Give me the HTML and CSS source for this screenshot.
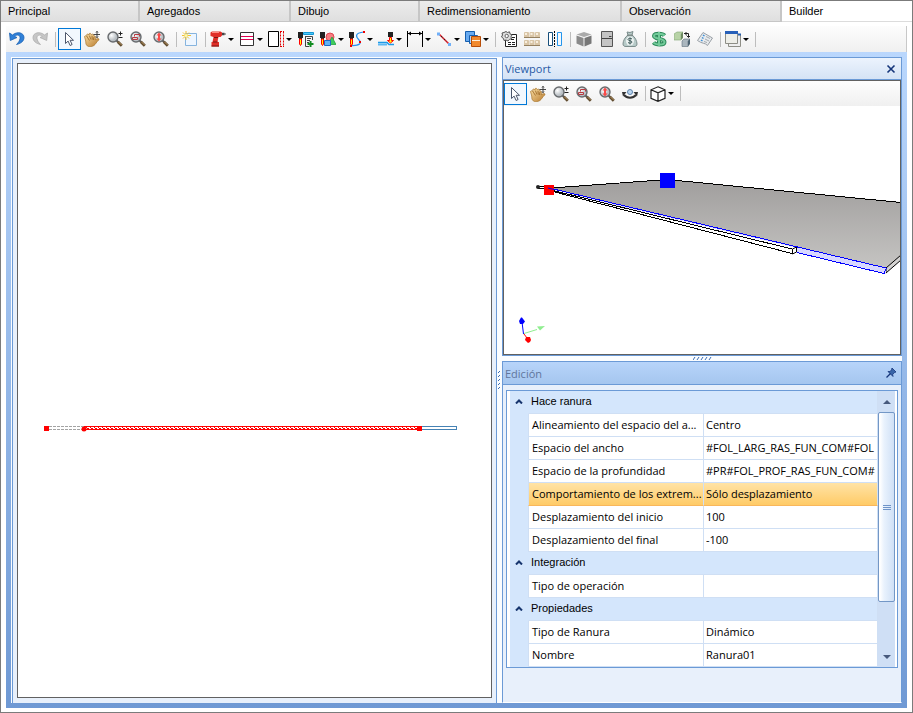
FILE: index.html
```
<!DOCTYPE html>
<html lang="es">
<head>
    <meta charset="UTF-8">
    <meta name="viewport" content="width=device-width, initial-scale=1.0">
    <title>Builder</title>
    <link rel="stylesheet" href="styles.css">
</head>
<body>
    <!-- Icons used more than once -->
    <svg class="sprite" aria-hidden="true">
        <defs>
            <radialGradient id="glass" cx="35%" cy="35%">
                <stop offset="0" stop-color="#fff"/>
                <stop offset="1" stop-color="#b9bfc4"/>
            </radialGradient>
            <linearGradient id="handFill" x1="0" y1="0" x2="1" y2="1">
                <stop offset="0" stop-color="#fbe0a6"/>
                <stop offset="1" stop-color="#b87a2c"/>
            </linearGradient>
            <linearGradient id="plate" x1="0" y1="0" x2="0" y2="1">
                <stop offset="0" stop-color="#a09e9d"/>
                <stop offset="1" stop-color="#c5c4c2"/>
            </linearGradient>
            <pattern id="hatch" x="84" y="427" width="4" height="2" patternUnits="userSpaceOnUse">
                <rect width="4" height="2" fill="#fff"/>
                <path d="M0 1.500h1M2 .5h1M3 1.500h1" stroke="#f00" shape-rendering="crispEdges"/>
            </pattern>
        </defs>
        <symbol id="i-cursor" viewBox="0 0 16 16">
            <path d="M4.500 1.500v11l2.600-2.400 2 4.400 2-1-2-4.200h3.400z" fill="#fff" stroke="#4b566b"/>
        </symbol>
        <symbol id="i-hand" viewBox="0 0 16 16">
            <path d="M.5 5.500C1 4 2.500 5 3.500 6.500L2.500 4c.5-1.500 2-1 2.700.3L5 2.800c.9-1 2.200-.3 2.500 1C8.500 2.500 10 3.300 10 5c1.500 0 1.800 1.300 1.500 2.500L11 9c2-1.800 4.500-1.800 4-.3-1.500 1-2.500 3-4 4.800-2 2.500-7 3-8.500.5C1.500 12.500 2 11.500 1.700 10z" fill="url(#handFill)" stroke="#a8752c" stroke-width=".7"/>
            <path d="M3.500 6.500l2 3M5.500 5l1.500 3.500M8 5l.3 3.500M10 6l-.7 3" stroke="#8f5a18" stroke-width=".7"/>
            <path d="M13 0v7M9.500 3.500h6.500M12 1.500l1-1 1 1M12 5.500l1 1 1-1" stroke="#333" stroke-width=".9" fill="none"/>
        </symbol>
        <symbol id="i-lens" viewBox="0 0 16 16">
            <path d="M9.500 9.500l1.500 1.500" stroke="#555" stroke-width="2"/>
            <path d="M10.800 10.800l4 4" stroke="#5f4a2d" stroke-width="2.800"/>
            <path d="M11.500 10.900l3 3" stroke="#b99663" stroke-width="1"/>
            <circle cx="6" cy="6" r="5" fill="url(#glass)" stroke="#686b6e" stroke-width="1.400"/>
        </symbol>
        <symbol id="i-zoom" viewBox="0 0 16 16">
            <use href="#i-lens"/>
            <path d="M11.500 2.500h4M13.500 .5v4M11.500 6.500h4" stroke="#222"/>
        </symbol>
        <symbol id="i-zoomrect" viewBox="0 0 16 16">
            <use href="#i-lens"/>
            <path d="M2.500 6.500v2h5v-2h-5M4.500 5.500v-2h5v2" fill="none" stroke="#b83a40"/>
        </symbol>
        <symbol id="i-zoomfit" viewBox="0 0 16 16">
            <use href="#i-lens"/>
            <path d="M6 1.500L3.500 4.500H5v3H3.500L6 10.500l2.500-3H7v-3h1.500z" fill="#fa4a48"/>
        </symbol>
        <symbol id="i-pen" viewBox="0 0 16 16">
            <path d="M0 1h5v6H4v1H1V7H0z" fill="#222"/>
            <path d="M1.500 8h2v5l-1 1.500-1-1.500z" fill="#ff0" stroke="#f00"/>
        </symbol>
    </svg>

    <div class="window">
        <div class="tabs" role="tablist">
            <button class="tab" role="tab">Principal</button>
            <button class="tab" role="tab">Agregados</button>
            <button class="tab" role="tab">Dibujo</button>
            <button class="tab" role="tab">Redimensionamiento</button>
            <button class="tab" role="tab">Observación</button>
            <button class="tab active" role="tab" aria-selected="true">Builder</button>
        </div>

        <div class="toolbar main-toolbar" role="toolbar">
            <button class="tool" aria-label="Deshacer"><svg viewBox="0 0 16 16"><path d="M.5 2l.8 7.500 6.700-3-2.300-1C8 3 11.500 4 11 7.500c-.2 2-1.500 4-3.500 6C12 12.500 15 10 15 6.500 15 1.500 8 0 3.500 4z" fill="#2f80d8" stroke="#1c62b4" stroke-width=".8"/></svg></button>
            <button class="tool" aria-label="Rehacer"><svg viewBox="0 0 16 16"><path d="M15.500 2l-.8 7.500-6.700-3 2.300-1C8 3 4.500 4 5 7.500c.2 2 1.500 4 3.500 6C4 12.500 1 10 1 6.500 1 1.500 8 0 12.500 4z" fill="#c6c6c6" stroke="#adadad" stroke-width=".8"/></svg></button>
            <span class="sep"></span>
            <button class="tool selected" aria-label="Seleccionar"><svg><use href="#i-cursor"/></svg></button>
            <button class="tool" aria-label="Mover vista"><svg><use href="#i-hand"/></svg></button>
            <button class="tool" aria-label="Zoom"><svg><use href="#i-zoom"/></svg></button>
            <button class="tool" aria-label="Zoom ventana"><svg><use href="#i-zoomrect"/></svg></button>
            <button class="tool" aria-label="Zoom total"><svg><use href="#i-zoomfit"/></svg></button>
            <span class="sep"></span>
            <button class="tool" aria-label="Nuevo"><svg viewBox="0 0 16 16"><path d="M3.500 2.500h11v12h-11z" fill="#eef6ff" stroke="#86b4de"/><path d="M4 0v9M0 4.500h9M1 1.500l6 6M7 1.500l-6 6" stroke="#f2c230"/><circle cx="4" cy="4.500" r="1.500" fill="#fff9a8"/></svg></button>
            <span class="sep"></span>
            <button class="tool drop" aria-label="Perforar"><svg viewBox="0 0 16 16"><path d="M.5 1.500L2 .5h8.500L12 1.500v3L10.500 6H8.500L8 8l-.5 3H9v4.500H1.500V11h1L3.500 6 .5 5z" fill="#e02e28"/><path d="M2 1.500h7" stroke="#ff8a80"/><path d="M12 3h2.500" stroke="#444" stroke-width="2.500"/><path d="M14 3h2" stroke="#555"/><path d="M4 6.500h4M3 11h4.500M1.500 15h7.500" stroke="#7b1512"/></svg></button>
            <button class="tool drop" aria-label="Ranura"><svg viewBox="0 0 16 16"><path d="M1.500 1.500h13v13h-13z" fill="#fff" stroke="#333"/><path d="M2 5.500h12M2 8.500h12" stroke="#e00050"/></svg></button>
            <button class="tool drop" aria-label="Borde"><svg viewBox="0 0 16 16"><path d="M.5 .5h10v15H.5z" fill="#fff" stroke="#000"/><path d="M12.500 .5v15M15.500 .5v15M12 .5h4M12 15.500h4" fill="none" stroke="#e00000" stroke-dasharray="2 1"/></svg></button>
            <button class="tool" aria-label="Agregar operación"><svg viewBox="0 0 16 16"><use href="#i-pen" width="16" height="16"/><path d="M5.500 1.500h10v2h-10z" fill="#4cc8f8" stroke="#1497d4"/><path d="M7.500 5v10.500H11M7 5.500h7.500V9M9 7.500h4M9 9.500h3M9 11.500h2" fill="none" stroke="#444"/><path d="M12.500 10v6M9.500 13h6" stroke="#118c20" stroke-width="2"/></svg></button>
            <button class="tool drop" aria-label="Formas"><svg viewBox="0 0 16 16"><circle cx="10" cy="6" r="4" fill="#f77d82" stroke="#de4750"/><use href="#i-pen" width="16" height="16"/><path d="M12 6l4 7.500H8z" fill="#3dcc5e" stroke="#189b37" stroke-width=".7"/><path d="M4.500 9.500h6v5h-6z" fill="#61b2f4" stroke="#1c6bc8"/></svg></button>
            <button class="tool drop" aria-label="Curva"><svg viewBox="0 0 16 16"><path d="M15 1C5 2 7 6 10 9s1 6-8 5.500" fill="none" stroke="#2593ef" stroke-width="1.200"/><use href="#i-pen" width="16" height="16"/><path d="M14 0h2v2h-2zM10 10h2v2h-2zM1 14h2v2H1z" fill="#e00"/></svg></button>
            <button class="tool drop" aria-label="Recorrido"><svg viewBox="0 0 16 16"><path d="M10 1h5v5h-5z" fill="#222"/><path d="M11.500 6.500h2v3h2L12.500 12l-3-2.500h2z" fill="#ff0" stroke="#f00"/><path d="M0 11.500h9l2 2h5" fill="none" stroke="#1c9ae8" stroke-width="1.500"/><path d="M0 13.500h9" stroke="#5cb8f4" stroke-width="2"/></svg></button>
            <button class="tool drop" aria-label="Cota"><svg viewBox="0 0 16 16"><path d="M.5 0v16M15.500 0v16M1 2.500h14" stroke="#000"/><path d="M1 2.500l3-2v4zM15 2.500l-3-2v4z" fill="#000"/></svg></button>
            <button class="tool drop" aria-label="Línea"><svg viewBox="0 0 16 16"><path d="M3 3l10 10" stroke="#df2630" stroke-width="1.600"/><path d="M5 5l6 6" stroke="#222" stroke-dasharray="2 2"/><path d="M1 1.500h3v3H1zM12 12h3v3h-3z" fill="#70b0f8"/></svg></button>
            <button class="tool drop" aria-label="Orden"><svg viewBox="0 0 16 16"><path d="M.5 .5h9v10h-9z" fill="#68aaf0" stroke="#165fae"/><path d="M4.500 4.500h8v8h-8z" fill="#b7d7f8" stroke="#165fae"/><path d="M6.500 5.500h9v10h-9z" fill="#f28a2e" stroke="#b74d08"/><path d="M7 9.500h8" stroke="#fff0dc"/></svg></button>
            <span class="sep"></span>
            <button class="tool" aria-label="Script"><svg viewBox="0 0 16 16"><path d="M4.500 3.500h11v12h-11z" fill="#fff" stroke="#222"/><path d="M7 6.500h7M10 8.500h4M7 11.500h7M7 13.500h7" stroke="#222" stroke-dasharray="3 1"/><path d="M5 .5l1.500 1L8.500.8l.5 2 2 1-1 2 .5 2-2 .5L7 10 5 9l-2 .5-.5-2L.5 6l1-2L1 2l2-.5z" fill="#ddd" stroke="#555"/><circle cx="5.700" cy="5" r="1.700" fill="#fff" stroke="#666"/></svg></button>
            <button class="tool" aria-label="Biblioteca"><svg viewBox="0 0 16 16"><g fill="#d9c5a6"><rect y="1" width="5" height="6" rx="1"/><rect x="5.500" y="1" width="5" height="6" rx="1"/><rect x="11" y="1" width="5" height="6" rx="1"/><rect y="9" width="5" height="6" rx="1"/><rect x="5.500" y="9" width="5" height="6" rx="1"/><rect x="11" y="9" width="5" height="6" rx="1"/></g><path d="M0 6.500h16M0 14.500h16" stroke="#95805f"/><path d="M1 3h2M6.500 3h2M12 3h2M1 11h2M6.500 11h2M12 11h2" stroke="#f8eedd" stroke-width="2"/></svg></button>
            <button class="tool" aria-label="Simetría"><svg viewBox="0 0 16 16"><path d="M1.500 1.500h4v13h-4z" fill="#fff" stroke="#174f7b"/><path d="M10.500 1.500h4v13h-4z" fill="#f2f9ff" stroke="#2495ec"/><path d="M7.500 0v16" stroke="#000" stroke-dasharray="2 1"/></svg></button>
            <span class="sep"></span>
            <button class="tool" aria-label="Módulo"><svg viewBox="0 0 16 16"><path d="M8 1l7.500 2.500L8 6 .5 3.500z" fill="#aaa"/><path d="M.5 4.500L7.500 7v8.500l-7-3z" fill="#8a8a8a"/><path d="M15.500 4.500L8.500 7v8.500l7-3z" fill="#777"/></svg></button>
            <button class="tool" aria-label="Puerta"><svg viewBox="0 0 16 16"><path d="M2.500 .5h11v15h-11z" fill="#c4c4c4" stroke="#555"/><path d="M3 7.500h10M10 5.500h2.500" stroke="#444"/></svg></button>
            <button class="tool" aria-label="Costo"><svg viewBox="0 0 16 16"><path d="M5 1l3 .5L11 .5 10 4c3 2 5 6 5 9 0 2-1.500 2.500-3 2.500H4C2.500 15.500 1 15 1 13c0-3 2-7 5-9z" fill="#b7cac8" stroke="#7c8d8c"/><path d="M5.500 4.200h5" stroke="#69716f"/><ellipse cx="8" cy="10" rx="4" ry="4.500" fill="#edf3f2"/><path d="M10 8C9 7 6 7 6 8.500s4 1 4 2.500-3 1.500-4 .5M8 6.500v7" fill="none" stroke="#3e5a5a"/></svg></button>
            <span class="sep"></span>
            <button class="tool" aria-label="Precio"><svg viewBox="0 0 16 16"><path d="M13.500 4.500C12 2.500 3 1.500 3 5c0 3.500 10.500 2 10.500 6 0 3.500-9 3-11 .5M8 1v14" fill="none" stroke="#2e8a5b" stroke-width="4"/><path d="M13.500 4.500C12 2.500 3 1.500 3 5c0 3.500 10.500 2 10.500 6 0 3.500-9 3-11 .5M8 1v14" fill="none" stroke="#72cb9a" stroke-width="2"/></svg></button>
            <button class="tool" aria-label="Reemplazar"><svg viewBox="0 0 16 16"><path d="M0 3l3-2h6L7 3v6H0z" fill="#b8d3a7" stroke="#80a574" stroke-width=".6"/><path d="M7 3l2-2v6L7 9z" fill="#6c8961"/><path d="M8 10l2-2h6l-2 2v5.500H8z" fill="#aab6be" stroke="#60717d" stroke-width=".6"/><path d="M14 10l2-2v5l-2 2.500z" fill="#4d6271"/><path d="M10 2.500h4.500V6M12.500 4.500l2 2 2-2M12 1v3" fill="none" stroke="#222"/></svg></button>
            <button class="tool" aria-label="Informe"><svg viewBox="0 0 16 16"><path d="M6 1.500l9.500 5.500-5 7.500C8 11.500 5 13 .5 9.500z" fill="#e8ebee" stroke="#9aa0a6"/><path d="M6 4l1.500 1M5 6.500L6.500 7.500M4 9l1.500 1" stroke="#3d8ed4" stroke-width="1.500"/><path d="M9 5.500l4 2M8 8l4 2M7 10.500l3 1" stroke="#a5abb0"/></svg></button>
            <span class="sep"></span>
            <button class="tool drop" aria-label="Ventanas"><svg viewBox="0 0 16 16"><path d="M3.500 3.500h12v12h-12z" fill="#eee" stroke="#8e8e86"/><path d="M3 3.500h13" stroke="#285fae" stroke-width="2"/><path d="M.5 1.500h12v11H.5z" fill="#eeeee8" stroke="#8e8e86"/><path d="M0 1.500h13" stroke="#2860b8" stroke-width="3"/></svg></button>
            <span class="sep"></span>
        </div>

        <div class="dock">
            <div class="panel drawing">
                <div class="sheet">
                    <svg class="scene" role="img" aria-label="Vista superior">
                        <g transform="translate(-18 -64)">
                            <path d="M49 426.500h35M49 429.500h35" stroke="#a3a3a3" stroke-dasharray="3 1"/>
                            <rect x="419.500" y="426.500" width="37" height="3" fill="#fff" stroke="#4682b4"/>
                            <rect x="84.500" y="426.500" width="335" height="3" fill="url(#hatch)" stroke="#f00"/>
                            <path d="M44 426h5v5h-5zM417 426h5v5h-5z" fill="#f00"/>
                            <circle cx="84" cy="429" r="2.500" fill="#f00"/>
                        </g>
                    </svg>
                </div>
            </div>

            <div class="splitter vertical">
                <svg viewBox="0 0 3 19"><path d="M0 2l2-2M0 6l2-2M0 10l2-2M0 14l2-2M0 18l2-2" stroke="#3a6cb4"/></svg>
            </div>

            <div class="side">
                <section class="panel viewport">
                    <header class="panel-title">
                        <h2>Viewport</h2>
                        <button class="title-button" aria-label="Cerrar"><svg viewBox="0 0 10 10"><path d="M1.500 1.500l7 7M8.500 1.500l-7 7" stroke="#15357a" stroke-width="1.600"/></svg></button>
                    </header>
                    <div class="view">
                        <div class="toolbar" role="toolbar">
                            <button class="tool selected" aria-label="Seleccionar en 3D"><svg><use href="#i-cursor"/></svg></button>
                            <button class="tool" aria-label="Mover vista 3D"><svg><use href="#i-hand"/></svg></button>
                            <button class="tool" aria-label="Zoom 3D"><svg><use href="#i-zoom"/></svg></button>
                            <button class="tool" aria-label="Zoom ventana 3D"><svg><use href="#i-zoomrect"/></svg></button>
                            <button class="tool" aria-label="Zoom total 3D"><svg><use href="#i-zoomfit"/></svg></button>
                            <button class="tool" aria-label="Orbitar"><svg viewBox="0 0 16 16"><path d="M2 9c3 3.500 9 3.500 12 0" fill="none" stroke="#333" stroke-width="2"/><path d="M0 6h4.500L1 10.500zM16 6h-4.500l3.500 4.500z" fill="#333"/><circle cx="8" cy="6" r="2.500" fill="#bcd6ef" stroke="#5d84ad"/></svg></button>
                            <span class="sep"></span>
                            <button class="tool drop" aria-label="Vista isométrica"><svg viewBox="0 0 16 16"><path d="M8 .8l7 3v8.500l-7 3-7-3V3.800zM1 3.800l7 3 7-3M8 6.800v8.500" fill="#fff" stroke="#222" stroke-width="1.200"/></svg></button>
                            <span class="sep"></span>
                        </div>
                        <svg class="scene" role="img" aria-label="Vista 3D">
                            <g transform="translate(-504 -106)">
                                <path d="M549 188L667 179.500 901 202v54l-15 12z" fill="url(#plate)"/>
                                <path d="M552 188L667 179.500 901 202.500" fill="none" stroke="#000" shape-rendering="crispEdges"/>
                                <path d="M886 268l15-13v5l-15 13z" fill="#d4d3d2" stroke="#000"/>
                                <path d="M549 188.500L886 268v5.500L795 252z" fill="#d8d8ff"/>
                                <path d="M549 190L795 247.500 793 253.500z" fill="#fff"/>
                                <path d="M549 189.500L792 249M549 190.500L792 253.500M538 186l12 1.500M538 188l12 2" fill="none" stroke="#000" shape-rendering="crispEdges"/>
                                <path d="M792.500 249l4-2v5l-4 2z" fill="#fff" stroke="#000"/>
                                <path d="M549 188L886 268M797 252.500l87 21 2.500-5.500" fill="none" stroke="#00f" shape-rendering="crispEdges"/>
                                <circle cx="538" cy="187" r="2" fill="#222"/>
                                <path d="M544 185h10v10h-10z" fill="#f00"/>
                                <path d="M548 188l6 1.500" stroke="#00f"/>
                                <path d="M660 173h15v15h-15z" fill="#00f"/>
                                <path d="M524 333.500l13-4" stroke="#90ee90"/>
                                <path d="M537 326.500l8-.5-5 4.500z" fill="#90ee90"/>
                                <path d="M523.500 334l-1.500-12" stroke="#00f"/>
                                <path d="M521 317.500h1l3 4-2 2.500h-3l-1-3z" fill="#00f"/>
                                <path d="M524 334l3 4" stroke="#f00"/>
                                <path d="M526 337h4l1 3-1 2-2 1-3-3z" fill="#f00"/>
                            </g>
                        </svg>
                    </div>
                </section>

                <div class="splitter horizontal">
                    <svg viewBox="0 0 19 3"><path d="M0 3l2-3M4 3l2-3M8 3l2-3M12 3l2-3M16 3l2-3" stroke="#3a6cb4"/></svg>
                </div>

                <section class="panel edit">
                    <header class="panel-title inactive">
                        <h2>Edición</h2>
                        <button class="title-button" aria-label="Fijar panel"><svg viewBox="0 0 10 10"><path d="M6 0l4 4-1.500.5-1.800 2 .3 2L2 3.500l2 .1 1.500-1.800z" fill="#3865a8" stroke="#15357a" stroke-width=".8"/><path d="M4.500 5.500L.5 9.500" stroke="#15357a" stroke-width="1.300"/></svg></button>
                    </header>
                    <div class="property-grid">
                        <table>
                            <colgroup>
                                <col class="col-gutter">
                                <col class="col-name">
                                <col>
                            </colgroup>
                            <tbody>
                                <tr class="category">
                                    <td><button class="fold" aria-label="Contraer Hace ranura"><svg viewBox="0 0 8 5"><path d="M1 4.500l3-3 3 3" fill="none" stroke="#17356e" stroke-width="2"/></svg></button></td>
                                    <th colspan="2">Hace ranura</th>
                                </tr>
                                <tr>
                                    <td></td>
                                    <th><label for="alineamiento">Alineamiento del espacio del a...</label></th>
                                    <td><select id="alineamiento"><option>Centro</option></select></td>
                                </tr>
                                <tr>
                                    <td></td>
                                    <th><label for="ancho">Espacio del ancho</label></th>
                                    <td><input id="ancho" type="text" value="#FOL_LARG_RAS_FUN_COM#FOL"></td>
                                </tr>
                                <tr>
                                    <td></td>
                                    <th><label for="profundidad">Espacio de la profundidad</label></th>
                                    <td><input id="profundidad" type="text" value="#PR#FOL_PROF_RAS_FUN_COM#"></td>
                                </tr>
                                <tr class="current">
                                    <td></td>
                                    <th><label for="extremos">Comportamiento de los extrem...</label></th>
                                    <td><select id="extremos"><option>Sólo desplazamiento</option></select></td>
                                </tr>
                                <tr>
                                    <td></td>
                                    <th><label for="inicio">Desplazamiento del inicio</label></th>
                                    <td><input id="inicio" type="text" value="100"></td>
                                </tr>
                                <tr>
                                    <td></td>
                                    <th><label for="final">Desplazamiento del final</label></th>
                                    <td><input id="final" type="text" value="-100"></td>
                                </tr>
                                <tr class="category">
                                    <td><button class="fold" aria-label="Contraer Integración"><svg viewBox="0 0 8 5"><path d="M1 4.500l3-3 3 3" fill="none" stroke="#17356e" stroke-width="2"/></svg></button></td>
                                    <th colspan="2">Integración</th>
                                </tr>
                                <tr>
                                    <td></td>
                                    <th><label for="operacion">Tipo de operación</label></th>
                                    <td><input id="operacion" type="text"></td>
                                </tr>
                                <tr class="category">
                                    <td><button class="fold" aria-label="Contraer Propiedades"><svg viewBox="0 0 8 5"><path d="M1 4.500l3-3 3 3" fill="none" stroke="#17356e" stroke-width="2"/></svg></button></td>
                                    <th colspan="2">Propiedades</th>
                                </tr>
                                <tr>
                                    <td></td>
                                    <th><label for="tipo">Tipo de Ranura</label></th>
                                    <td><select id="tipo"><option>Dinámico</option></select></td>
                                </tr>
                                <tr>
                                    <td></td>
                                    <th><label for="nombre">Nombre</label></th>
                                    <td><input id="nombre" type="text" value="Ranura01"></td>
                                </tr>
                            </tbody>
                        </table>
                        <div class="scrollbar">
                            <button class="scroll-up" aria-label="Subir"></button>
                            <div class="thumb"><span class="grip"></span></div>
                            <button class="scroll-down" aria-label="Bajar"></button>
                        </div>
                    </div>
                </section>
            </div>
        </div>
    </div>
</body>
</html>
```

FILE: styles.css
```
:root {
    --line: #6b9ad6;
    --panel: #e8f0fb;
    --row-line: #cfdff4;
    --category: #d4e6fc;
    --tab-font: "Liberation Sans", Arial, sans-serif;
    --ui-font: "Open Sans", "Noto Sans", sans-serif;
}

* {
    box-sizing: border-box;
}

body {
    margin: 0;
    font-family: var(--ui-font);
    font-size: 11px;
    color: #000;
    background-color: #fff;
}

button, input, select {
    margin: 0;
    padding: 0;
    border: 0;
    background: none;
    font: inherit;
    color: inherit;
}

svg {
    display: block;
}

.sprite {
    position: absolute;
    width: 0;
    height: 0;
}

.window {
    display: flex;
    flex-direction: column;
    height: 100vh;
    border: 1px solid #7b7b7b;
}

/* Tabs */
.tabs {
    display: grid;
    grid-template-columns: 139fr 151fr 129fr 202fr 160fr 130fr;
    flex: none;
    height: 21px;
}

.tab {
    padding-left: 7px;
    border-right: 2px solid #c6c6c6;
    border-bottom: 1px solid #c6c6c6;
    background: linear-gradient(#ececec, #dfdfdf);
    font-family: var(--tab-font);
    text-align: left;
}

.tab.active {
    border-right: 0;
    border-bottom-color: #dcdcdc;
    background: #fff;
}

/* Toolbars */
.toolbar {
    display: flex;
    align-items: center;
    flex: none;
    height: 25px;
    background: linear-gradient(#fdfdfd, #f0f0f0);
}

.main-toolbar {
    height: 26px;
    margin: 4px 5px 0;
    border-right: 1px solid #c8c8c8;
}

.tool {
    display: flex;
    align-items: center;
    flex: none;
    width: 23px;
    height: 22px;
    padding-left: 3px;
}

.tool svg {
    flex: none;
    width: 16px;
    height: 16px;
}

.tool.selected {
    padding-left: 2px;
    border: 1px solid #0078d7;
    background: #f2f8fe;
}

.tool.drop {
    gap: 2px;
    width: 29px;
    padding-left: 2px;
}

.tool.drop::after {
    content: "";
    border: 3px solid transparent;
    border-top-color: #000;
    border-bottom: 0;
}

.sep {
    flex: none;
    width: 1px;
    height: 15px;
    margin: 0 2px 0 3px;
    background: #bdbdbd;
}

/* Docking area */
.dock {
    display: grid;
    grid-template-columns: 1fr 5px 400px;
    flex: 1;
    min-height: 0;
    margin: 0 5px 4px;
    padding: 5px;
    background: linear-gradient(#fbfdff, #fbfdff) content-box, linear-gradient(#bad7fd, #6f99d4);
}

.panel {
    border: 1px solid var(--line);
    background: var(--panel);
}

.drawing {
    margin: 1px 0 0 1px;
    padding: 4px 4px 5px;
    border-bottom: 0;
}

.sheet {
    height: 100%;
    border: 1px solid #616161;
    background: #fff;
}

.scene {
    width: 100%;
    height: 100%;
    min-height: 0;
}

.splitter {
    display: flex;
    align-items: center;
    justify-content: center;
}

.splitter.vertical svg {
    width: 3px;
    height: 19px;
}

.splitter.horizontal {
    flex: none;
    height: 5px;
}

.splitter.horizontal svg {
    width: 19px;
    height: 3px;
}

.side {
    display: flex;
    flex-direction: column;
    min-height: 0;
}

.viewport {
    display: flex;
    flex-direction: column;
    flex: 1;
    min-height: 0;
}

.panel-title {
    display: flex;
    align-items: center;
    justify-content: space-between;
    flex: none;
    height: 22px;
    padding: 0 5px 0 2px;
    border-bottom: 1px solid var(--line);
    background: linear-gradient(#ecf3fd, #d5e3f5);
    color: #2759a5;
}

.panel-title.inactive {
    height: 23px;
    background: linear-gradient(#b7d4fa, #a5c6ef);
    color: #60759c;
}

.panel-title h2 {
    margin: 0;
    font-size: 11px;
    font-weight: 400;
}

.title-button svg {
    width: 10px;
    height: 10px;
}

.view {
    display: flex;
    flex-direction: column;
    flex: 1;
    min-height: 0;
    border: 1px solid #616161;
    background: #fff;
}

.view .scene {
    flex: 1;
}

/* Property grid */
.edit {
    flex: none;
    padding-bottom: 34px;
    border-bottom-color: #fff;
}

.property-grid {
    display: flex;
    margin: 5px 3px 0;
    padding: 0 2px 0 3px;
    border: 1px solid var(--line);
    background: #fff;
}

table {
    flex: 1;
    border-collapse: separate;
    border-spacing: 0;
    table-layout: fixed;
}

.col-gutter {
    width: 18px;
}

.col-name {
    width: 176px;
}

th, td {
    height: 23px;
    padding: 0 0 2px;
    border-bottom: 1px solid var(--row-line);
    font-weight: 400;
    text-align: left;
    white-space: nowrap;
}

th {
    padding-left: 3px;
    border-right: 1px solid var(--row-line);
    border-left: 1px solid var(--row-line);
}

td:last-child {
    padding-left: 2px;
    border-right: 1px solid var(--row-line);
}

td:first-child {
    border-bottom-color: var(--category);
    background: var(--category);
}

td input, td select {
    display: block;
    width: 100%;
    height: 20px;
    appearance: none;
}

.category th {
    padding-left: 2px;
    border-left-color: var(--category);
    background: var(--category);
    font-family: var(--tab-font);
}

.current th, .current td:last-child {
    border-bottom-color: #f9b75c;
    background: linear-gradient(#ffe3a6, #ffcb67);
}

.fold {
    display: block;
    margin: 0 auto;
}

.fold svg {
    width: 8px;
    height: 5px;
}

/* Scrollbar */
.scrollbar {
    display: flex;
    flex-direction: column;
    flex: none;
    width: 17px;
    background: #cfdff5;
}

.scroll-up, .scroll-down {
    display: flex;
    align-items: center;
    justify-content: center;
    flex: none;
    height: 21px;
}

.scroll-up::before, .scroll-down::before {
    content: "";
    border: 4px solid transparent;
}

.scroll-up::before {
    border-top: 0;
    border-bottom-color: #47597c;
}

.scroll-down::before {
    border-top-color: #47597c;
    border-bottom: 0;
}

.thumb {
    display: flex;
    align-items: center;
    justify-content: center;
    height: 190px;
    margin-bottom: auto;
    border: 1px solid #7397c6;
    border-radius: 2px;
    background: linear-gradient(90deg, #fff 1px, #e9f2fd 5px, #cfe0f6);
}

.grip {
    width: 8px;
    height: 5px;
    border-top: 1px solid #6f94c8;
    border-bottom: 1px solid #6f94c8;
    background: linear-gradient(#6f94c8, #6f94c8) center / 8px 1px no-repeat;
}
```
